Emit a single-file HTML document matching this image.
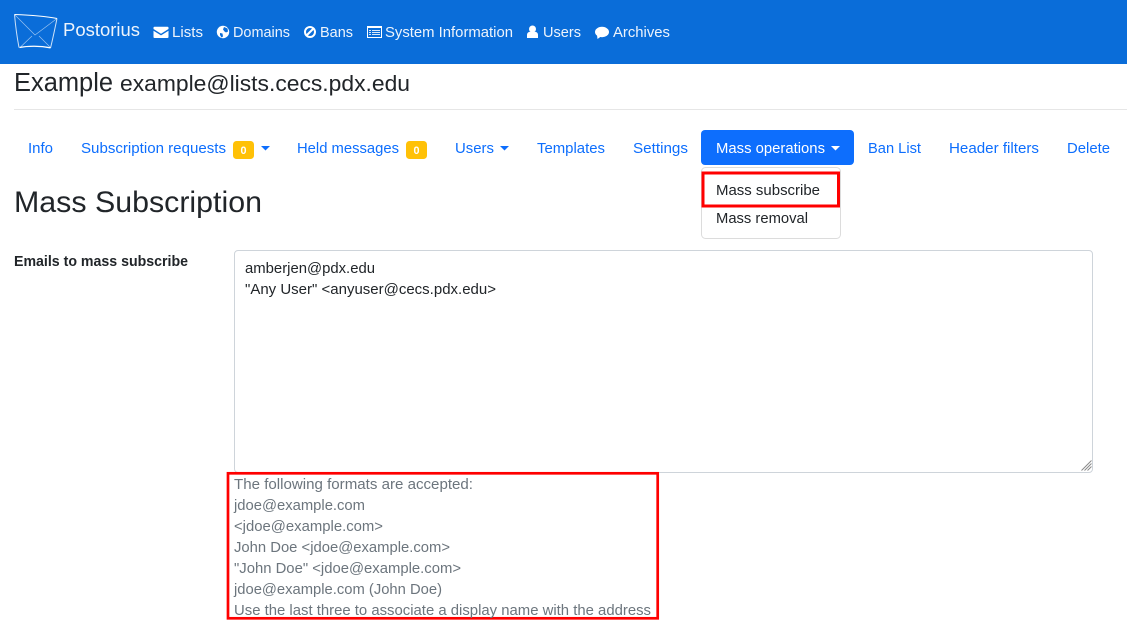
<!DOCTYPE html>
<html lang="en"><head><meta charset="utf-8"><title>Mass Subscription</title>
<style>
html,body{margin:0;padding:0;background:#fff;width:1127px;height:627px;overflow:hidden}
svg{position:absolute;left:0;top:0;display:block}
text{font-family:"Liberation Sans",sans-serif;font-size:15px}
.n{fill:#eef4fc}.t{fill:#0d6efd}.d{fill:#212529}.g{fill:#6c757d}
</style></head><body>
<svg width="1127" height="627" viewBox="0 0 1127 627" xmlns="http://www.w3.org/2000/svg">
<rect width="1127" height="64" fill="#0a6dd9"/>
<g fill="none" stroke="#fff" stroke-linejoin="round">
<path d="M14.500 14.500C28 15 44 16 57 18.500" stroke-width="1.100"/>
<path d="M14.500 14.500C15.500 26 17 37 19 47.500M57 18.500C55 28 53 38 50.500 48" stroke-width="1" opacity=".8"/>
<path d="M19.500 47.500C28 45.800 40 45.800 50.500 47.800" stroke-width="1.300"/>
<path d="M15 15L35 35L57 18.500M32 36L20 47.500M39 36L50 47" stroke-width=".7" opacity=".6"/>
</g>
<text class="n" x="63" y="36" textLength="77" lengthAdjust="spacingAndGlyphs" style="font-size:18.500px">Postorius</text>
<path fill="#fff" d="M154.500 26.800h13c.7 0 1 .4 1 1v1.200l-7.500 4.700-7.500-4.700v-1.200c0-.6.300-1 1-1zM153.500 30.800l7.500 4.600 7.500-4.600v6.200c0 .6-.4 1-1 1h-13c-.6 0-1-.4-1-1z"/>
<text class="n" x="172" y="37" textLength="31" lengthAdjust="spacingAndGlyphs">Lists</text>
<circle cx="223" cy="32" r="6.200" fill="#fff"/><path fill="#0a6dd9" d="M224 27l3.500 1.500 .5 3-2 1-1.500-1-1.500-2zM220 33l2.500 .5 .5 3-1.500 1-1.500-2.500z"/>
<text class="n" x="233" y="37" textLength="57" lengthAdjust="spacingAndGlyphs">Domains</text>
<circle cx="310" cy="32" r="5" fill="none" stroke="#fff" stroke-width="2"/><path d="M306.500 35.500l7-7" stroke="#fff" stroke-width="2"/>
<text class="n" x="320" y="37" textLength="33" lengthAdjust="spacingAndGlyphs">Bans</text>
<rect x="367.500" y="26.500" width="14" height="11" fill="none" stroke="#fff"/><rect x="367" y="26" width="15" height="2" fill="#fff"/><path d="M369 30.500h2M372 30.500h8M369 32.500h2M372 32.500h8M369 34.500h2M372 34.500h8" stroke="#fff" stroke-width="1" opacity=".85"/>
<text class="n" x="385" y="37" textLength="128" lengthAdjust="spacingAndGlyphs">System Information</text>
<circle cx="532.500" cy="29" r="3.500" fill="#fff"/><path fill="#fff" d="M527 38v-3c0-2 1.500-3.200 3.200-3.200h4.600c1.700 0 3.200 1.200 3.200 3.200v3z"/>
<text class="n" x="543" y="37" textLength="38" lengthAdjust="spacingAndGlyphs">Users</text>
<ellipse cx="602" cy="32" rx="7" ry="5.200" fill="#fff"/><path fill="#fff" d="M597 35l.5 4 3.500-2.500z"/>
<text class="n" x="613" y="37" textLength="57" lengthAdjust="spacingAndGlyphs">Archives</text>

<text class="d" x="14" y="91" textLength="99" lengthAdjust="spacingAndGlyphs" style="font-size:25.500px">Example</text>
<text class="d" x="120" y="91" textLength="290" lengthAdjust="spacingAndGlyphs" style="font-size:22px">example@lists.cecs.pdx.edu</text>
<rect x="14" y="109" width="1113" height="1" fill="#e6e6e6"/>

<text class="t" x="28" y="153" textLength="25" lengthAdjust="spacingAndGlyphs">Info</text>
<text class="t" x="81" y="153" textLength="145" lengthAdjust="spacingAndGlyphs">Subscription requests</text>
<rect x="233" y="141" width="21" height="18" rx="3.500" fill="#ffc107"/>
<text x="243.500" y="154" text-anchor="middle" fill="#fff" style="font-size:10.800px;font-weight:bold">0</text>
<path class="t" d="M261 146h9l-4.500 4.500z"/>
<text class="t" x="297" y="153" textLength="102" lengthAdjust="spacingAndGlyphs">Held messages</text>
<rect x="406" y="141" width="21" height="18" rx="3.500" fill="#ffc107"/>
<text x="416.500" y="154" text-anchor="middle" fill="#fff" style="font-size:10.800px;font-weight:bold">0</text>
<text class="t" x="455" y="153" textLength="39" lengthAdjust="spacingAndGlyphs">Users</text>
<path class="t" d="M500 146h9l-4.500 4.500z"/>
<text class="t" x="537" y="153" textLength="68" lengthAdjust="spacingAndGlyphs">Templates</text>
<text class="t" x="633" y="153" textLength="55" lengthAdjust="spacingAndGlyphs">Settings</text>
<rect x="701" y="130" width="153" height="35" rx="4" fill="#0d6efd"/>
<text fill="#fff" x="716" y="153" textLength="109" lengthAdjust="spacingAndGlyphs">Mass operations</text>
<path fill="#fff" d="M831 146h9l-4.500 4.500z"/>
<text class="t" x="868" y="153" textLength="53" lengthAdjust="spacingAndGlyphs">Ban List</text>
<text class="t" x="949" y="153" textLength="90" lengthAdjust="spacingAndGlyphs">Header filters</text>
<text class="t" x="1067" y="153" textLength="43" lengthAdjust="spacingAndGlyphs">Delete</text>

<text class="d" x="14" y="212" textLength="248" lengthAdjust="spacingAndGlyphs" style="font-size:30px">Mass Subscription</text>

<rect x="701.500" y="167.500" width="139" height="71" rx="4" fill="#fff" stroke="#dcdcdc"/>
<rect x="703" y="173" width="135.500" height="33" fill="none" stroke="#f00" stroke-width="3"/>
<text class="d" x="716" y="195" textLength="104" lengthAdjust="spacingAndGlyphs">Mass subscribe</text>
<text class="d" x="716" y="223" textLength="92" lengthAdjust="spacingAndGlyphs">Mass removal</text>

<text class="d" x="14" y="266" textLength="174" lengthAdjust="spacingAndGlyphs" style="font-weight:bold">Emails to mass subscribe</text>

<rect x="234.500" y="250.500" width="858" height="222" rx="3.500" fill="#fff" stroke="#ced4da"/>
<text class="d" x="245" y="273" textLength="130" lengthAdjust="spacingAndGlyphs">amberjen@pdx.edu</text>
<text class="d" x="245" y="294" textLength="251" lengthAdjust="spacingAndGlyphs">"Any User" &lt;anyuser@cecs.pdx.edu&gt;</text>
<path d="M1081.500 470.500l10-10M1084.500 470.500l7-7M1087.500 470.500l4-4" stroke="#8a8a8a" stroke-width="1" fill="none"/>

<rect x="228" y="473.300" width="429.700" height="145" fill="#fff" stroke="#f00" stroke-width="2.700"/>
<text class="g" x="234" y="489" textLength="239" lengthAdjust="spacingAndGlyphs">The following formats are accepted:</text>
<text class="g" x="234" y="510" textLength="131" lengthAdjust="spacingAndGlyphs">jdoe@example.com</text>
<text class="g" x="234" y="531" textLength="149" lengthAdjust="spacingAndGlyphs">&lt;jdoe@example.com&gt;</text>
<text class="g" x="234" y="552" textLength="216" lengthAdjust="spacingAndGlyphs">John Doe &lt;jdoe@example.com&gt;</text>
<text class="g" x="234" y="573" textLength="227" lengthAdjust="spacingAndGlyphs">"John Doe" &lt;jdoe@example.com&gt;</text>
<text class="g" x="234" y="594" textLength="208" lengthAdjust="spacingAndGlyphs">jdoe@example.com (John Doe)</text>
<text class="g" x="234" y="615" textLength="417" lengthAdjust="spacingAndGlyphs">Use the last three to associate a display name with the address</text>
</svg>
</body></html>
